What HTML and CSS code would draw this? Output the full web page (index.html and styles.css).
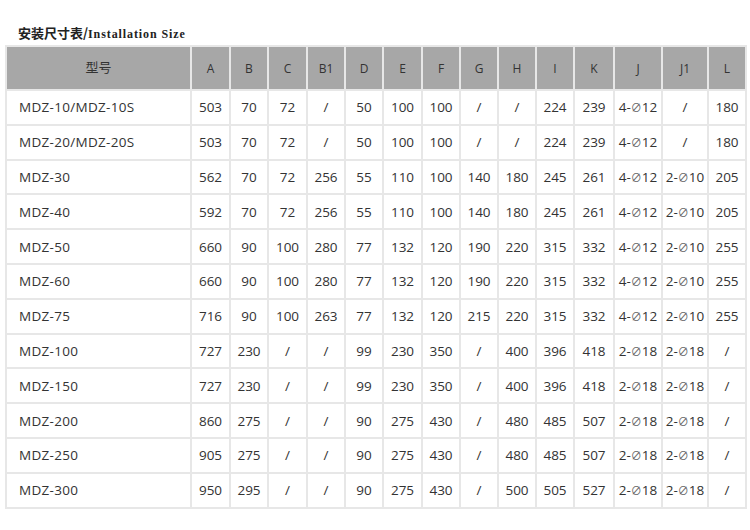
FILE: index.html
```html
<!DOCTYPE html>
<html lang="zh">
<head>
<meta charset="utf-8">
<link rel="stylesheet" href="styles.css">
</head>
<body>
<div class="page">
  <h2 class="title"><span class="cn">安装尺寸表/</span><span class="en">Installation Size</span></h2>
  <table class="spec">
    <colgroup>
      <col class="c-model"><col class="c39"><col class="c38"><col class="c39"><col class="c38"><col class="c38"><col class="c39"><col class="c38"><col class="c38"><col class="c38"><col class="c38"><col class="c40"><col class="c48"><col class="c46"><col class="c38">
    </colgroup>
    <thead>
      <tr><th class="model-h">型号</th><th>A</th><th>B</th><th>C</th><th>B1</th><th>D</th><th>E</th><th>F</th><th>G</th><th>H</th><th>I</th><th>K</th><th>J</th><th>J1</th><th>L</th></tr>
    </thead>
    <tbody>
      <tr><td class="model">MDZ-10/MDZ-10S</td><td>503</td><td>70</td><td>72</td><td>/</td><td>50</td><td>100</td><td>100</td><td>/</td><td>/</td><td>224</td><td>239</td><td>4-<span class="d">∅</span>12</td><td>/</td><td>180</td></tr>
      <tr><td class="model">MDZ-20/MDZ-20S</td><td>503</td><td>70</td><td>72</td><td>/</td><td>50</td><td>100</td><td>100</td><td>/</td><td>/</td><td>224</td><td>239</td><td>4-<span class="d">∅</span>12</td><td>/</td><td>180</td></tr>
      <tr><td class="model">MDZ-30</td><td>562</td><td>70</td><td>72</td><td>256</td><td>55</td><td>110</td><td>100</td><td>140</td><td>180</td><td>245</td><td>261</td><td>4-<span class="d">∅</span>12</td><td>2-<span class="d">∅</span>10</td><td>205</td></tr>
      <tr><td class="model">MDZ-40</td><td>592</td><td>70</td><td>72</td><td>256</td><td>55</td><td>110</td><td>100</td><td>140</td><td>180</td><td>245</td><td>261</td><td>4-<span class="d">∅</span>12</td><td>2-<span class="d">∅</span>10</td><td>205</td></tr>
      <tr><td class="model">MDZ-50</td><td>660</td><td>90</td><td>100</td><td>280</td><td>77</td><td>132</td><td>120</td><td>190</td><td>220</td><td>315</td><td>332</td><td>4-<span class="d">∅</span>12</td><td>2-<span class="d">∅</span>10</td><td>255</td></tr>
      <tr><td class="model">MDZ-60</td><td>660</td><td>90</td><td>100</td><td>280</td><td>77</td><td>132</td><td>120</td><td>190</td><td>220</td><td>315</td><td>332</td><td>4-<span class="d">∅</span>12</td><td>2-<span class="d">∅</span>10</td><td>255</td></tr>
      <tr><td class="model">MDZ-75</td><td>716</td><td>90</td><td>100</td><td>263</td><td>77</td><td>132</td><td>120</td><td>215</td><td>220</td><td>315</td><td>332</td><td>4-<span class="d">∅</span>12</td><td>2-<span class="d">∅</span>10</td><td>255</td></tr>
      <tr><td class="model">MDZ-100</td><td>727</td><td>230</td><td>/</td><td>/</td><td>99</td><td>230</td><td>350</td><td>/</td><td>400</td><td>396</td><td>418</td><td>2-<span class="d">∅</span>18</td><td>2-<span class="d">∅</span>18</td><td>/</td></tr>
      <tr><td class="model">MDZ-150</td><td>727</td><td>230</td><td>/</td><td>/</td><td>99</td><td>230</td><td>350</td><td>/</td><td>400</td><td>396</td><td>418</td><td>2-<span class="d">∅</span>18</td><td>2-<span class="d">∅</span>18</td><td>/</td></tr>
      <tr><td class="model">MDZ-200</td><td>860</td><td>275</td><td>/</td><td>/</td><td>90</td><td>275</td><td>430</td><td>/</td><td>480</td><td>485</td><td>507</td><td>2-<span class="d">∅</span>18</td><td>2-<span class="d">∅</span>18</td><td>/</td></tr>
      <tr><td class="model">MDZ-250</td><td>905</td><td>275</td><td>/</td><td>/</td><td>90</td><td>275</td><td>430</td><td>/</td><td>480</td><td>485</td><td>507</td><td>2-<span class="d">∅</span>18</td><td>2-<span class="d">∅</span>18</td><td>/</td></tr>
      <tr><td class="model">MDZ-300</td><td>950</td><td>295</td><td>/</td><td>/</td><td>90</td><td>275</td><td>430</td><td>/</td><td>500</td><td>505</td><td>527</td><td>2-<span class="d">∅</span>18</td><td>2-<span class="d">∅</span>18</td><td>/</td></tr>
    </tbody>
  </table>
</div>
</body>
</html>
```

FILE: styles.css
```css
html, body {
  margin: 0;
  padding: 0;
  background: #ffffff;
}
body {
  font-family: "Open Sans", "Noto Sans CJK SC", sans-serif;
  color: #333333;
}
.page {
  padding: 0 5px;
}
.title {
  margin: 0;
  height: 45px;
  box-sizing: border-box;
  padding: 25px 0 0 13px;
  font-size: 13px;
  line-height: 16px;
  font-weight: bold;
  color: #222222;
}
.title .cn {
  font-family: "Noto Sans CJK SC", sans-serif;
  font-weight: 700;
}
.title .en {
  font-family: "Liberation Serif", serif;
  font-weight: 700;
  font-size: 12px;
  letter-spacing: 0.9px;
}
.spec {
  width: 740px;
  table-layout: fixed;
  border-collapse: collapse;
  font-size: 13.5px;
}
.c-model { width: 185px; }
.c38 { width: 38px; }
.c39 { width: 39px; }
.c40 { width: 40px; }
.c46 { width: 46px; }
.c48 { width: 48px; }
.spec th, .spec td {
  border: 2px solid #e7e7e7;
  padding: 0;
  text-align: center;
  white-space: nowrap;
  overflow: hidden;
}
.spec th {
  background: #a7a7a7;
  height: 42px;
  font-weight: normal;
  font-size: 12px;
  color: #333333;
}
.spec th.model-h {
  font-family: "Noto Sans CJK SC", sans-serif;
  font-size: 13px;
  padding-bottom: 3px;
  height: 39px;
}
.spec td {
  height: 32.8px;
  color: #333333;
}
.spec td.model {
  text-align: left;
  padding-left: 12px;
  letter-spacing: 0.3px;
}
.d {
  font-size: 11px;
  color: #666666;
}
```
